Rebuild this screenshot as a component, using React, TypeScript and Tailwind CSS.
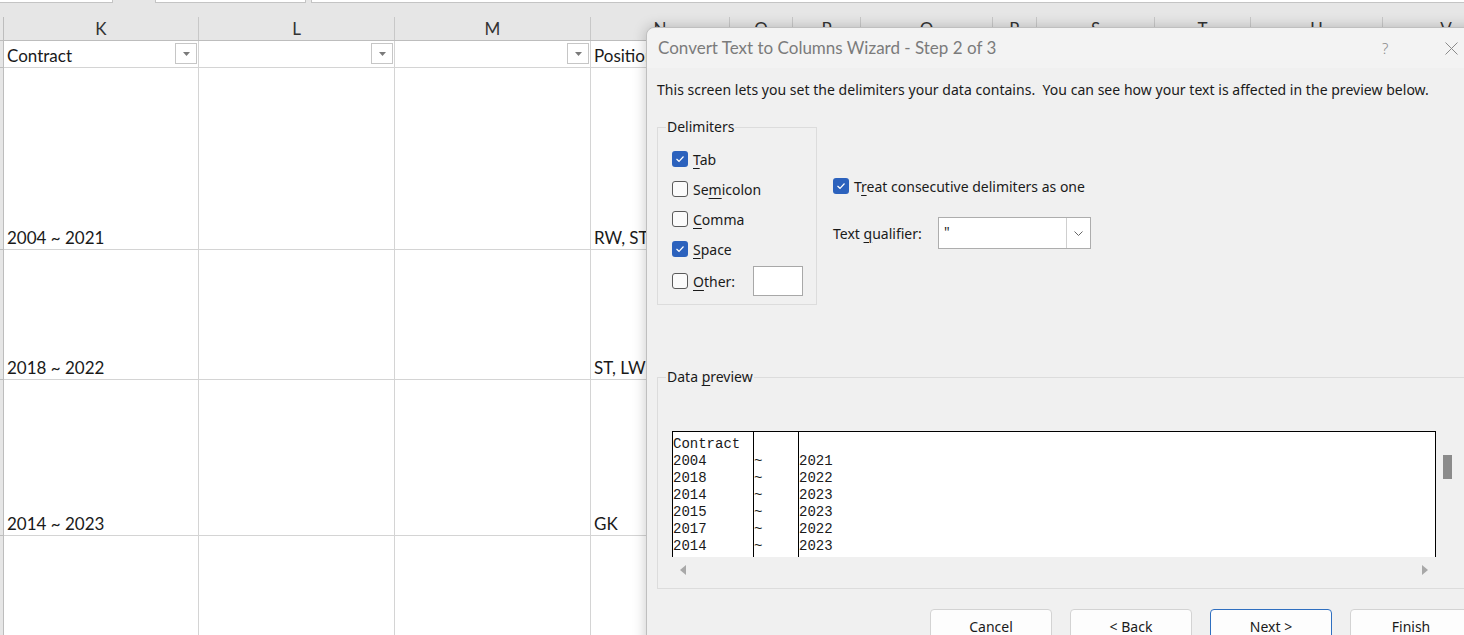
import React from "react";

const COLS = [
  { w: "w-[195px]", l: "K" },
  { w: "w-[196px]", l: "L" },
  { w: "w-[196px]", l: "M" },
  { w: "w-[139px]", l: "N" },
  { w: "w-[63px]", l: "O" },
  { w: "w-[68px]", l: "P" },
  { w: "w-[132px]", l: "Q" },
  { w: "w-[44px]", l: "R" },
  { w: "w-[118px]", l: "S" },
  { w: "w-[96px]", l: "T" },
  { w: "w-[132px]", l: "U" },
  { w: "w-[127px]", l: "V" },
];

const ROWS: { h: string; cells: (string | null)[]; filter?: boolean }[] = [
  { h: "h-[27px]", cells: ["Contract", "", "", "Position"], filter: true },
  { h: "h-[182px]", cells: ["2004 ~ 2021", "", "", "RW, ST"] },
  { h: "h-[130px]", cells: ["2018 ~ 2022", "", "", "ST, LW"] },
  { h: "h-[156px]", cells: ["2014 ~ 2023", "", "", "GK"] },
  { h: "h-[120px]", cells: ["", "", "", ""] },
];

function FilterBtn() {
  return (
    <div className="absolute right-[1px] top-[2px] w-[22px] h-[21px] border border-[#c6c6c6] bg-white flex items-center justify-center">
      <svg width="7" height="4" viewBox="0 0 7 4">
        <path d="M0 0 L7 0 L3.5 4 Z" fill="#7a7a7a" />
      </svg>
    </div>
  );
}

function Sheet() {
  return (
    <div className="flex flex-col font-['Lato','Liberation_Sans',sans-serif] text-[17px] text-[#1a1a1a]">
      {/* top strip */}
      <div className="h-[17px] flex bg-[#e6e6e6]">
        <div className="w-[113px] h-[3px] bg-white border-b border-r border-[#c4c4c4]" />
        <div className="w-[42px]" />
        <div className="w-[151px] h-[3px] bg-white border-b border-x border-[#c4c4c4]" />
        <div className="w-[5px]" />
        <div className="flex-1 h-[3px] bg-white border-b border-l border-[#c4c4c4]" />
      </div>
      {/* column header */}
      <div className="h-[24px] flex bg-[#e6e6e6] border-b border-[#bdbdbd]">
        <div className="w-[4px] shrink-0 border-r border-[#bdbdbd]" />
        {COLS.map((c) => (
          <div
            key={c.l}
            className={`${c.w} shrink-0 border-r border-[#c8c8c8] flex items-center justify-center text-[#333] leading-none`}
          >
            {c.l}
          </div>
        ))}
      </div>
      {ROWS.map((r, ri) => (
        <div key={ri} className={`${r.h} flex shrink-0`}>
          <div className="w-[4px] shrink-0 bg-[#e6e6e6] border-r border-b border-[#bdbdbd]" />
          {COLS.map((c, ci) => (
            <div
              key={c.l}
              className={`${c.w} shrink-0 relative bg-white border-r border-b border-[#d4d4d4] flex items-end px-[3px] leading-[22px] whitespace-nowrap overflow-hidden`}
            >
              {r.cells[ci] ?? ""}
              {r.filter && ci < 3 ? <FilterBtn /> : null}
            </div>
          ))}
        </div>
      ))}
    </div>
  );
}

function Box({ checked }: { checked?: boolean }) {
  return checked ? (
    <div className="w-[16px] h-[16px] rounded-[3px] bg-[#2c62bd] flex items-center justify-center shrink-0">
      <svg width="10" height="8" viewBox="0 0 10 8">
        <path d="M1.5 4 L4 6.3 L8.5 1.5" stroke="white" strokeWidth="1.2" fill="none" />
      </svg>
    </div>
  ) : (
    <div className="w-[16px] h-[16px] rounded-[3px] border border-[#5a5a5a] bg-[#fbfbfb] shrink-0" />
  );
}

function U({ children }: { children: React.ReactNode }) {
  return <span className="underline underline-offset-[3px] decoration-1">{children}</span>;
}

function Check({ checked, children }: { checked?: boolean; children: React.ReactNode }) {
  return (
    <div className="h-[30px] flex items-center gap-[5px]">
      <Box checked={checked} />
      <span>{children}</span>
    </div>
  );
}

function Btn({ children, primary }: { children: React.ReactNode; primary?: boolean }) {
  return (
    <div
      className={`w-[122px] h-[36px] shrink-0 rounded-[4px] bg-[#fdfdfd] border ${
        primary ? "border-[#2f6fc0]" : "border-[#d3d3d3]"
      } flex items-start justify-center pt-[6px] whitespace-pre`}
    >
      {children}
    </div>
  );
}

function Dialog() {
  return (
    <div className="absolute left-[646px] top-[27px] w-[840px] h-[640px] rounded-tl-[8px] border border-[#bfbfbf] bg-[#f0f0f0] shadow-[0_0_14px_rgba(0,0,0,0.22)] font-['Noto_Sans','Open_Sans',sans-serif] text-[14px] text-[#1a1a1a] overflow-hidden">
      {/* title bar */}
      <div className="h-[40px] flex items-center bg-[#f3f3f3] rounded-tl-[8px]">
        <div className="pl-[11px] w-[735px] shrink-0 text-[17px] text-[#7b7b7b] font-['Lato','Noto_Sans',sans-serif]">
          Convert Text to Columns Wizard - Step 2 of 3
        </div>
        <div className="text-[15px] text-[#8a8a8a] font-light">?</div>
        <div className="ml-[57px]">
          <svg width="13" height="13" viewBox="0 0 13 13">
            <path d="M0.5 0.5 L12.5 12.5 M12.5 0.5 L0.5 12.5" stroke="#8a8a8a" strokeWidth="1" fill="none" />
          </svg>
        </div>
      </div>
      {/* intro */}
      <div className="pl-[10px] mt-[12px] leading-[20px] whitespace-pre tracking-[0.03px]">
        This screen lets you set the delimiters your data contains.  You can see how your text is affected in the preview below.
      </div>
      {/* delimiters + options */}
      <div className="flex mt-[27px] pl-[10px]">
        <div className="relative w-[160px] h-[178px] border border-[#dcdcdc] pl-[14px] pt-[16px] shrink-0">
          <div className="absolute -top-[11px] left-[8px] px-[1px] bg-[#f0f0f0] leading-[20px]">Delimiters</div>
          <Check checked>
            <U>T</U>ab
          </Check>
          <Check>
            Se<U>m</U>icolon
          </Check>
          <Check>
            <U>C</U>omma
          </Check>
          <Check checked>
            <U>S</U>pace
          </Check>
          <div className="h-[34px] flex items-center gap-[5px]">
            <Box />
            <span>
              <U>O</U>ther:
            </span>
            <div className="ml-[13px] w-[50px] h-[30px] bg-white border border-[#a8a8a8]" />
          </div>
        </div>
        <div className="flex flex-col ml-[16px] pt-[49px]">
          <div className="h-[20px] flex items-center gap-[5px]">
            <Box checked />
            <span>
              T<U>r</U>eat consecutive delimiters as one
            </span>
          </div>
          <div className="flex items-center mt-[21px]">
            <div className="w-[105px]">
              Text <U>q</U>ualifier:
            </div>
            <div className="w-[153px] h-[32px] bg-white border border-[#adadad] flex">
              <div className="flex-1 pl-[5px] leading-[28px]">"</div>
              <div className="w-[24px] border-l border-[#cfcfcf] flex items-center justify-center">
                <svg width="9" height="5" viewBox="0 0 9 5">
                  <path d="M0.5 0.5 L4.5 4.5 L8.5 0.5" stroke="#666" fill="none" />
                </svg>
              </div>
            </div>
          </div>
        </div>
      </div>
      {/* data preview */}
      <div className="relative mt-[72px] ml-[10px] h-[212px] border border-[#dcdcdc] pl-[14px] pt-[53px] flex">
        <div className="absolute -top-[11px] left-[8px] px-[1px] bg-[#f0f0f0] leading-[20px]">
          Data <U>p</U>review
        </div>
        <div className="w-[764px] flex flex-col shrink-0">
          <div className="h-[126px] bg-white border-t border-x border-black flex font-['Liberation_Mono','Courier_New',monospace] text-[14px] leading-[17px] overflow-hidden">
            <div className="w-[80px] pt-[4px]">
              {["Contract", "2004", "2018", "2014", "2015", "2017", "2014"].map((t, i) => (
                <div key={i}>{t}</div>
              ))}
            </div>
            <div className="w-[45px] border-l border-black pt-[4px]">
              {["\u00a0", "~", "~", "~", "~", "~", "~"].map((t, i) => (
                <div key={i}>{t}</div>
              ))}
            </div>
            <div className="flex-1 border-l border-black pt-[4px]">
              {["\u00a0", "2021", "2022", "2023", "2023", "2022", "2023"].map((t, i) => (
                <div key={i}>{t}</div>
              ))}
            </div>
          </div>
          <div className="h-[25px] flex items-center justify-between px-[8px]">
            <svg width="6" height="10" viewBox="0 0 6 10">
              <path d="M6 0 L0 5 L6 10 Z" fill="#a8a8a8" />
            </svg>
            <svg width="6" height="10" viewBox="0 0 6 10">
              <path d="M0 0 L6 5 L0 10 Z" fill="#a8a8a8" />
            </svg>
          </div>
        </div>
        <div className="ml-[7px] pt-[24px]">
          <div className="w-[9px] h-[24px] bg-[#8b8b8b]" />
        </div>
      </div>
      {/* buttons */}
      <div className="flex gap-[18px] pl-[283px] mt-[20px]">
        <Btn>Cancel</Btn>
        <Btn>
          {"< "}
          <U>B</U>ack
        </Btn>
        <Btn primary>
          <U>N</U>
          {"ext >"}
        </Btn>
        <Btn>
          <U>F</U>inish
        </Btn>
      </div>
    </div>
  );
}

export default function App() {
  return (
    <div className="relative w-[1464px] h-[635px] overflow-hidden bg-[#e6e6e6]">
      <Sheet />
      <Dialog />
    </div>
  );
}
